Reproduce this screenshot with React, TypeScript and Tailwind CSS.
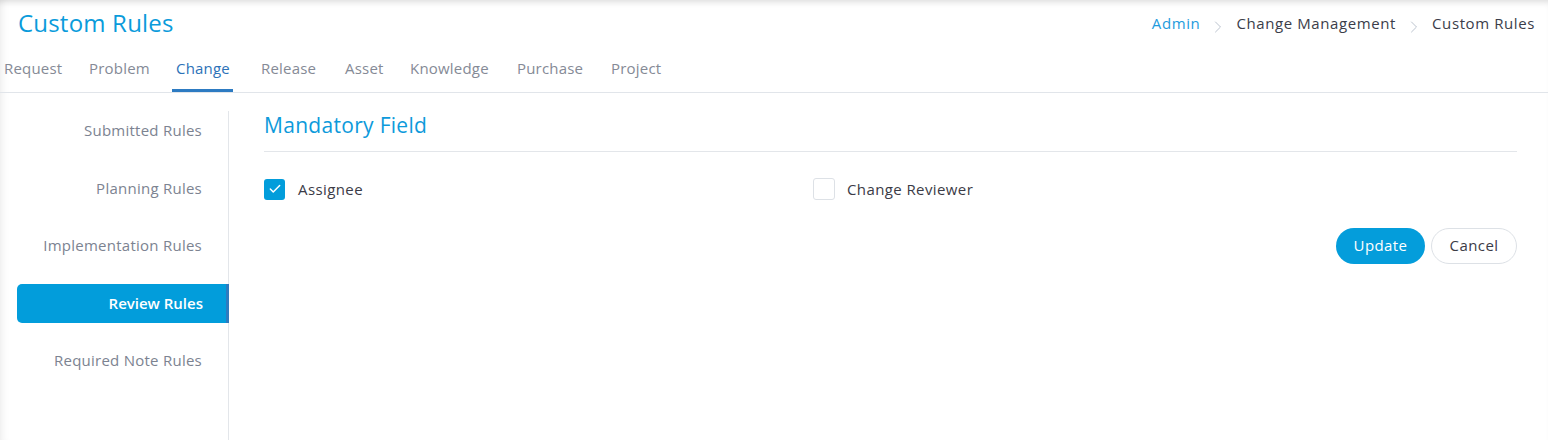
import { Check, ChevronRight } from "lucide-react";

// tab slot widths match the spacing of the original module bar
const TABS: [string, number][] = [
  ["Request", 85],
  ["Problem", 87],
  ["Change", 85],
  ["Release", 84],
  ["Asset", 65],
  ["Knowledge", 107],
  ["Purchase", 94],
  ["Project", 80],
];
const RULES = ["Submitted Rules", "Planning Rules", "Implementation Rules", "Review Rules", "Required Note Rules"];

export default function App() {
  return (
    <div
      className="relative w-[1548px] h-[440px] overflow-hidden bg-white text-[15px] tracking-[0.4px] shadow-[inset_0_6px_6px_-4px_rgba(0,0,0,0.14),inset_9px_0_8px_-7px_rgba(0,0,0,0.07)]"
      style={{ fontFamily: '"Open Sans", "Noto Sans", sans-serif' }}
    >
      {/* header */}
      <div className="flex items-start justify-between h-[46px]">
        <h1 className="pl-[18px] pt-[7px] text-[24px] leading-[32px] tracking-[0.2px] text-[#0a9bdb]">Custom Rules</h1>
        <nav className="flex items-start pt-[12px] pr-[13px] tracking-[0.6px] text-[#3b3d4a] leading-[22px]">
          <span className="text-[#1e9bdd]">Admin</span>
          <ChevronRight className="mx-[8px] mt-[5px] w-[20px] h-[20px] text-[#bcc4cf]" strokeWidth={1.2} />
          <span>Change Management</span>
          <ChevronRight className="mx-[8px] mt-[5px] w-[20px] h-[20px] text-[#bcc4cf]" strokeWidth={1.2} />
          <span>Custom Rules</span>
        </nav>
      </div>

      {/* module tabs */}
      <div className="flex h-[47px] border-b border-[#e1e5ea] tracking-[0.2px]">
        {TABS.map(([t, w]) => (
          <div key={t} className="flex h-full" style={{ width: w }}>
            <span
              className={
                "pl-[4px] pt-[2px] flex items-center h-full border-b-[3px] " +
                (t === "Change" ? "border-[#2d7bc2] text-[#2d72b8] pr-[3px]" : "border-transparent text-[#858a96]")
              }
            >
              {t}
            </span>
          </div>
        ))}
      </div>

      <div className="flex">
        {/* rules sidebar */}
        <div className="w-[229px] pt-[18px] pl-[17px] h-[347px]">
          <div className="border-r border-[#e3e6ea] h-full flex flex-col tracking-[0.25px]">
            {RULES.map((r) => (
              <div
                key={r}
                className={
                  "h-[39px] flex items-center justify-end mb-[18.5px] " +
                  (r === "Review Rules"
                    ? "bg-[#029ddb] text-white font-semibold rounded-l-[5px] border-r-[3px] border-[#2d7bbf] -mr-px pr-[23px] tracking-[0px]"
                    : "text-[#7c8391] pr-[26px]")
                }
              >
                {r}
              </div>
            ))}
          </div>
        </div>

        {/* content */}
        <div className="flex-1 pl-[35px] pr-[31px]">
          <h2 className="pt-[18px] h-[59px] text-[21px] leading-[28px] tracking-[0.3px] text-[#0d9adb] border-b border-[#e3e6ea]">
            Mandatory Field
          </h2>
          <div className="flex pt-[26px]">
            <label className="w-[549px] flex items-center gap-[13px] text-[#3b3b46]">
              <span className="w-[21px] h-[21px] rounded-[3px] bg-[#029ddb] flex items-center justify-center">
                <Check className="w-[14px] h-[14px] text-white" strokeWidth={2.5} />
              </span>
              Assignee
            </label>
            <label className="flex items-center gap-[12px] text-[#3b3b46]">
              <span className="w-[22px] h-[22px] rounded-[3px] border border-[#dde1e6] bg-white" />
              Change Reviewer
            </label>
          </div>
          <div className="flex justify-end gap-[6px] pt-[27px]">
            <button className="h-[36px] w-[89px] rounded-full bg-[#049ddb] text-white">Update</button>
            <button className="h-[36px] w-[86px] rounded-full border border-[#dde1e6] text-[#3b3b46]">Cancel</button>
          </div>
        </div>
      </div>
    </div>
  );
}
